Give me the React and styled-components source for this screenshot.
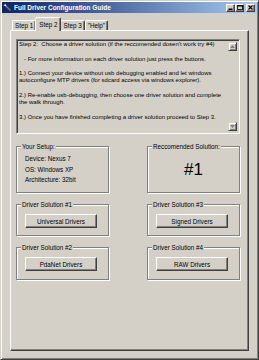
import React from 'react';
import styled, { createGlobalStyle } from 'styled-components';

const FACE = '#d4d0c8';

const Global = createGlobalStyle`
  html, body { margin: 0; padding: 0; background: ${FACE}; }
  body { font-family: "Liberation Sans", Arial, sans-serif; font-size: 6.3px; color: #000; }
  * { box-sizing: border-box; }
`;

const Window = styled.div`
  width: 259px;
  height: 360px;
  display: flex;
  flex-direction: column;
  background: ${FACE};
  border: 1px solid;
  border-color: ${FACE} #404040 #404040 ${FACE};
  box-shadow: inset 1px 1px 0 #fff, inset -1px -1px 0 #808080;
  padding: 1px;
`;

const TitleBar = styled.div`
  height: 11px;
  display: flex;
  align-items: center;
  padding: 0 2px 0 1px;
  background: linear-gradient(to right, #0a246a, #a6caf0);
  color: #fff;
`;

const TitleText = styled.span`
  font-weight: bold;
  font-size: 6.5px;
  margin-left: 2px;
  flex: 1;
  white-space: nowrap;
`;

const TitleButtons = styled.div`
  display: flex;
  align-items: center;
`;

const CaptionButton = styled.div`
  width: 9px;
  height: 8px;
  display: flex;
  align-items: center;
  justify-content: center;
  background: ${FACE};
  border: 1px solid;
  border-color: #fff #404040 #404040 #fff;
  box-shadow: inset -1px -1px 0 #808080;
  margin-left: ${p => (p.$gap ? '2px' : '0')};
`;

const Body = styled.div`
  flex: 1;
  display: flex;
  flex-direction: column;
  padding: 4px 8px 7px 8px;
`;

const TabRow = styled.div`
  height: 13px;
  display: flex;
  align-items: flex-end;
  padding-left: 2px;
`;

const Tab = styled.div`
  position: relative;
  height: ${p => (p.$active ? '14px' : '10px')};
  margin: ${p => (p.$active ? '0 -1px -1px -1px' : '0')};
  z-index: ${p => (p.$active ? 1 : 0)};
  padding: ${p => (p.$active ? '0 3px 1px' : '0 2px')};
  display: flex;
  align-items: center;
  background: ${FACE};
  border: 1px solid;
  border-bottom: none;
  border-color: #fff #404040 transparent #fff;
  box-shadow: inset -1px 0 0 #808080;
  border-radius: 2px 2px 0 0;
  white-space: nowrap;
`;

const Panel = styled.div`
  flex: 1;
  display: flex;
  flex-direction: column;
  border: 1px solid;
  border-color: #fff #404040 #404040 #fff;
  box-shadow: inset -1px -1px 0 #808080;
  padding: 8px 8px 0 5px;
`;

const TextBox = styled.div`
  height: 95px;
  display: flex;
  border: 1px solid;
  border-color: #808080 #fff #fff #808080;
  box-shadow: inset 1px 1px 0 #404040, inset -1px -1px 0 ${FACE};
  padding: 1px 2px 2px 2px;
`;

const TextContent = styled.div`
  flex: 1;
  font-size: 6px;
  line-height: 7.3px;
  white-space: pre;
  overflow: hidden;
`;

const ScrollBar = styled.div`
  width: 9px;
  display: flex;
  flex-direction: column;
  justify-content: space-between;
  padding-top: 1px;
`;

const ArrowButton = styled.div`
  width: 9px;
  height: 9px;
  display: flex;
  align-items: center;
  justify-content: center;
  background: ${FACE};
  border: 1px solid;
  border-color: ${FACE} #404040 #404040 ${FACE};
  box-shadow: inset 1px 1px 0 #fff, inset -1px -1px 0 #808080;
`;

const GroupGrid = styled.div`
  margin-top: 12px;
  display: grid;
  grid-template-columns: 93px 93px;
  grid-template-rows: 47px 32px 33px;
  justify-content: space-between;
  row-gap: 11px;
`;

const Group = styled.div`
  position: relative;
  border: 1px solid #808080;
  box-shadow: inset 1px 1px 0 #fff, 1px 1px 0 #fff;
  display: flex;
  flex-direction: column;
  padding: ${p => p.$pad || '0'};
  align-items: ${p => (p.$center ? 'center' : 'stretch')};
  justify-content: ${p => (p.$center ? 'center' : 'flex-start')};
`;

const Legend = styled.span`
  position: absolute;
  top: -4px;
  left: 4px;
  padding: 0 1px;
  line-height: 7px;
  background: ${FACE};
  white-space: nowrap;
`;

const InfoLine = styled.div`
  line-height: 10.5px;
  white-space: nowrap;
`;

const BigNumber = styled.div`
  font-size: 17px;
  line-height: 17px;
`;

const PushButton = styled.div`
  width: 72px;
  height: 14px;
  display: flex;
  align-items: center;
  justify-content: center;
  background: ${FACE};
  border: 1px solid;
  border-color: #fff #404040 #404040 #fff;
  box-shadow: inset -1px -1px 0 #808080;
  white-space: nowrap;
`;

const lines = [
  "Step 2:  Choose a driver solution (if the reccomended dosen't work try #4)",
  '',
  '   - For more information on each driver solution just press the buttons.',
  '',
  '1.) Connect your device without usb debugging enabled and let windows',
  'autoconfigure MTP drivers (for sdcard access via windows explorer).',
  '',
  '2.) Re-enable usb-debugging, then choose one driver solution and complete',
  'the walk through.',
  '',
  '3.) Once you have finished completing a driver solution proceed to Step 3.',
];

const AppIcon = () => (
  <svg width="9" height="9" viewBox="0 0 9 9">
    <path d="M1 1.5 L2.5 0.5 L3.5 2.5 L8 7 L7 8 L2.5 3.5 L0.5 2.5 Z" fill="#fff" stroke="#222" strokeWidth="0.6" />
    <path d="M3.2 3.2 L7.5 7.5" stroke="#555" strokeWidth="0.8" />
  </svg>
);

const Arrow = ({ up }) => (
  <svg width="5" height="3" viewBox="0 0 5 3">
    <path d={up ? 'M0 3 L2.5 0 L5 3 Z' : 'M0 0 L5 0 L2.5 3 Z'} fill="#808080" />
  </svg>
);

const DriverGroup = ({ title, label }) => (
  <Group $pad="9px 0 0 8px">
    <Legend>{title}</Legend>
    <PushButton>{label}</PushButton>
  </Group>
);

export default function App() {
  return (
    <>
      <Global />
      <Window>
        <TitleBar>
          <AppIcon />
          <TitleText>Full Driver Configuration Guide</TitleText>
          <TitleButtons>
            <CaptionButton>
              <svg width="5" height="5" viewBox="0 0 5 5"><rect x="0.5" y="3.5" width="4" height="1.5" fill="#000" /></svg>
            </CaptionButton>
            <CaptionButton>
              <svg width="6" height="5" viewBox="0 0 6 5"><rect x="0.5" y="0.5" width="5" height="4" fill="none" stroke="#000" strokeWidth="0.8" /><rect x="0.5" y="0.3" width="5" height="1.2" fill="#000" /></svg>
            </CaptionButton>
            <CaptionButton $gap>
              <svg width="5" height="5" viewBox="0 0 5 5"><path d="M0.5 0.5 L4.5 4.5 M4.5 0.5 L0.5 4.5" stroke="#000" strokeWidth="1.1" /></svg>
            </CaptionButton>
          </TitleButtons>
        </TitleBar>
        <Body>
          <TabRow>
            <Tab>Step 1</Tab>
            <Tab $active>Step 2</Tab>
            <Tab>Step 3</Tab>
            <Tab>"Help"</Tab>
          </TabRow>
          <Panel>
            <TextBox>
              <TextContent>{lines.join('\n')}</TextContent>
              <ScrollBar>
                <ArrowButton><Arrow up /></ArrowButton>
                <ArrowButton><Arrow /></ArrowButton>
              </ScrollBar>
            </TextBox>
            <GroupGrid>
              <Group $pad="7px 0 0 8px">
                <Legend>Your Setup:</Legend>
                <InfoLine>Device: Nexus 7</InfoLine>
                <InfoLine>OS: Windows XP</InfoLine>
                <InfoLine>Architecture: 32bit</InfoLine>
              </Group>
              <Group $center>
                <Legend>Reccomended Solution:</Legend>
                <BigNumber>#1</BigNumber>
              </Group>
              <DriverGroup title="Driver Solution #1" label="Universal Drivers" />
              <DriverGroup title="Driver Solution #3" label="Signed Drivers" />
              <DriverGroup title="Driver Solution #2" label="PdaNet Drivers" />
              <DriverGroup title="Driver Solution #4" label="RAW Drivers" />
            </GroupGrid>
          </Panel>
        </Body>
      </Window>
    </>
  );
}
